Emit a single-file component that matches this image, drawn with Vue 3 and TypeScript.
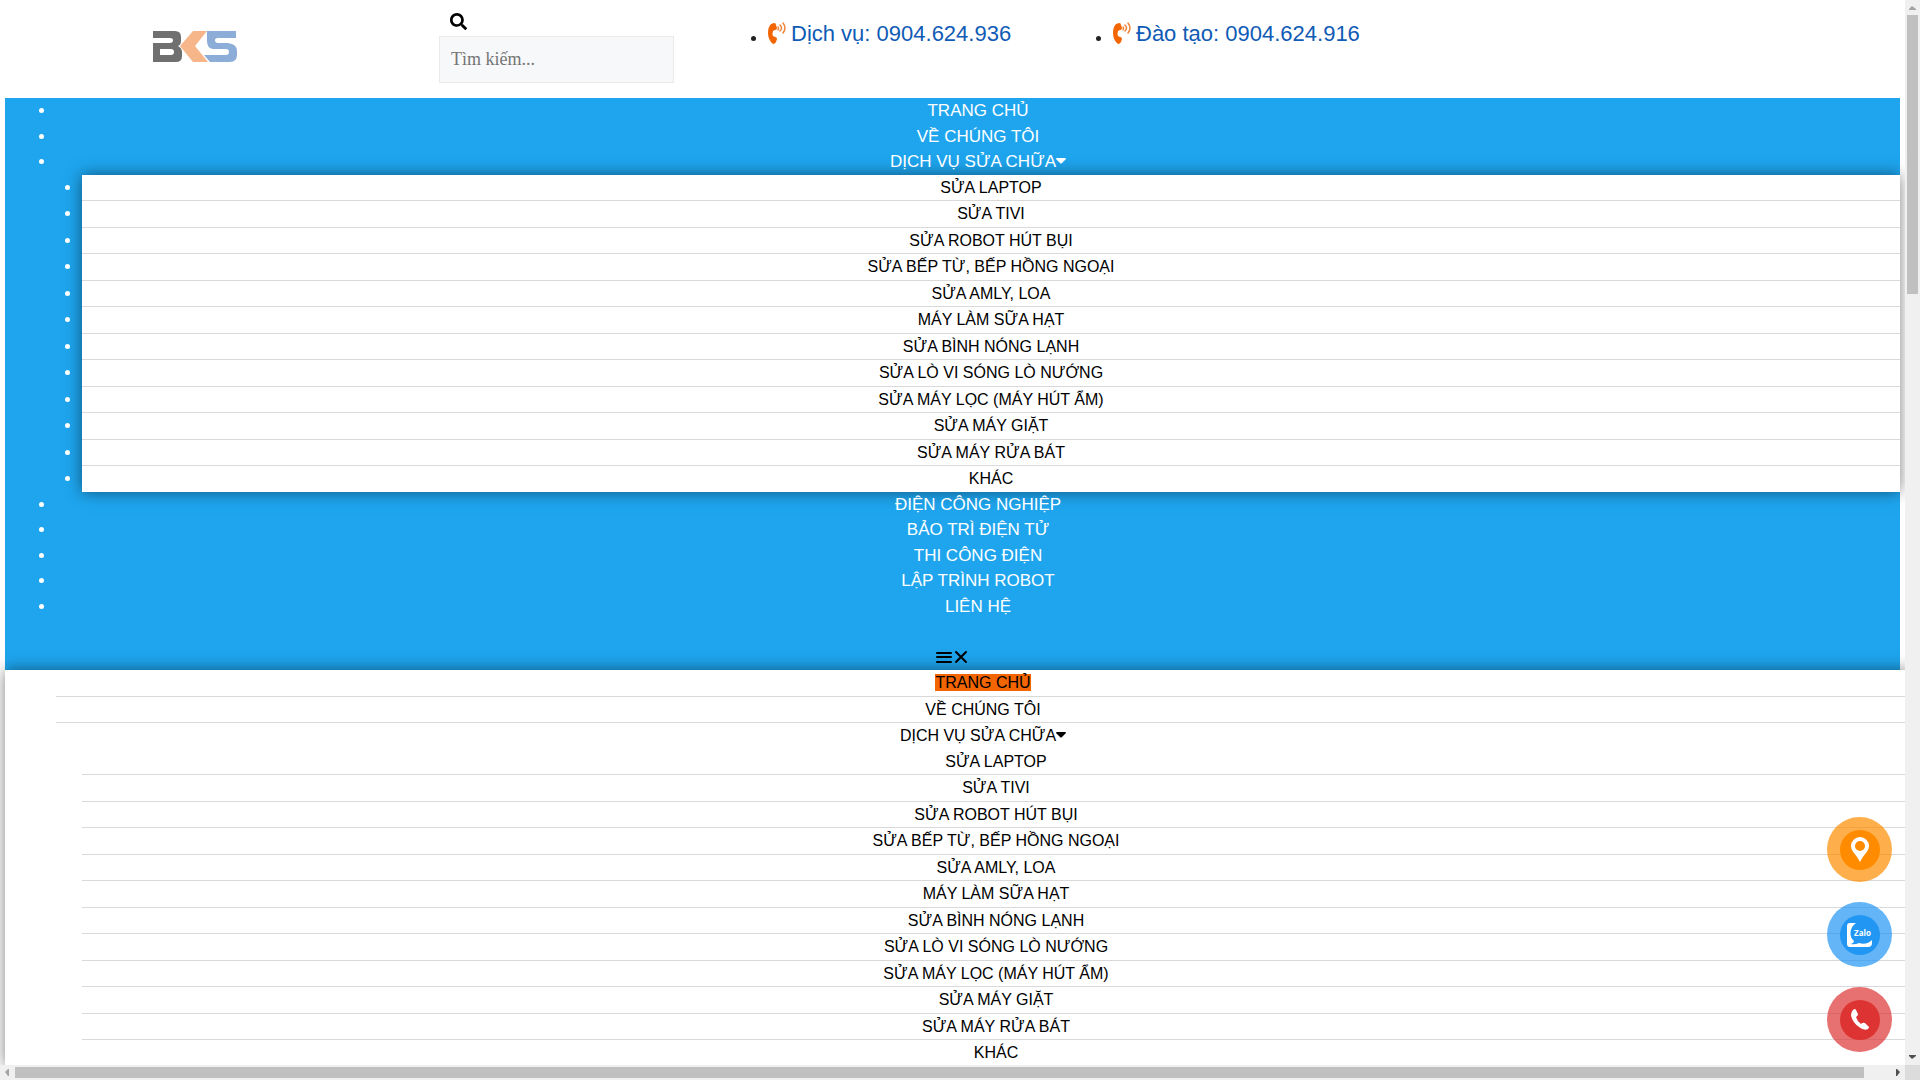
<script setup lang="ts">
import { ref } from 'vue'

interface MenuItem {
  label: string
  children?: string[]
}

const services: string[] = [
  'SỬA LAPTOP',
  'SỬA TIVI',
  'SỬA ROBOT HÚT BỤI',
  'SỬA BẾP TỪ, BẾP HỒNG NGOẠI',
  'SỬA AMLY, LOA',
  'MÁY LÀM SỮA HẠT',
  'SỬA BÌNH NÓNG LẠNH',
  'SỬA LÒ VI SÓNG LÒ NƯỚNG',
  'SỬA MÁY LỌC (MÁY HÚT ẨM)',
  'SỬA MÁY GIẶT',
  'SỬA MÁY RỬA BÁT',
  'KHÁC',
]

const menu: MenuItem[] = [
  { label: 'TRANG CHỦ' },
  { label: 'VỀ CHÚNG TÔI' },
  { label: 'DỊCH VỤ SỬA CHỮA', children: services },
  { label: 'ĐIỆN CÔNG NGHIỆP' },
  { label: 'BẢO TRÌ ĐIỆN TỬ' },
  { label: 'THI CÔNG ĐIỆN' },
  { label: 'LẬP TRÌNH ROBOT' },
  { label: 'LIÊN HỆ' },
]

const dropdownMenu: MenuItem[] = menu.slice(0, 3)
const phones: string[] = ['Dịch vụ: 0904.624.936', 'Đào tạo: 0904.624.916']
const query = ref('')
</script>

<template>
  <div class="frame">
    <div class="page">
      <header class="header">
        <a class="logo" href="#" aria-label="BKS">
          <svg width="84" height="31" viewBox="0 0 84 31">
            <path fill="#707070" fill-rule="evenodd" d="M0 0H22Q28 0 28 6V10Q28 14 25 15Q29 17 29 21V25Q29 31 23 31H0V12H17Q20 12 20 9Q20 7 17 7H0ZM7 18V24H18Q21 24 21 21Q21 18 18 18Z" />
            <path fill="#f7b58a" d="M40 0H54L42 15L55 31H40L27 15Z" />
            <path fill="#8badd8" d="M54 0H83V7H65Q62 7 62 9Q62 12 65 12H75Q84 13 84 20V24Q84 31 77 31H57L51 24H73Q76 24 76 21Q76 18 73 18H60Q54 17 54 10Z" />
          </svg>
        </a>
        <form class="search" role="search" @submit.prevent>
          <label for="search-box" aria-label="Tìm kiếm">
            <svg width="17" height="17" viewBox="0 0 512 512">
              <path d="M505 443L405 343c-4-4-10-7-17-7H372c28-35 44-80 44-128C416 93 323 0 208 0S0 93 0 208s93 208 208 208c48 0 93-16 128-44v16c0 7 3 13 7 17l100 100c9 9 25 9 34 0l28-28c9-9 9-25 0-34zM208 336c-71 0-128-57-128-128 0-71 57-128 128-128 71 0 128 57 128 128 0 71-57 128-128 128z" />
            </svg>
          </label>
          <input id="search-box" v-model="query" type="search" placeholder="Tìm kiếm..." />
        </form>
        <ul v-for="phone in phones" :key="phone" class="phone">
          <li>
            <a href="#">
              <svg width="18" height="22" viewBox="0 0 18 22" fill="none">
                <path fill="#f26500" d="M3 2L6 1Q8 1 8 3L9 6Q9 8 7 8L5 9Q4 12 5 14L7 15Q9 15 9 17L8 20Q7 22 5 22Q0 18 0 11Q0 5 3 2Z" />
                <path stroke="#f28438" stroke-width="1.5" stroke-linecap="round" d="M10 5Q11 6 10 8M12 3Q15 6 12 9M15 1Q19 6 15 11" />
              </svg>
              <span>{{ phone }}</span>
            </a>
          </li>
        </ul>
      </header>

      <div class="nav-block">
        <nav class="main-nav">
          <ul>
            <li v-for="item in menu" :key="item.label">
              <a href="#">{{ item.label }}<svg v-if="item.children" class="caret" width="10" height="6" viewBox="0 0 10 6"><path d="M1 0H9Q10 0 10 1L6 5Q5 6 4 5L0 1Q0 0 1 0Z" /></svg></a>
              <ul v-if="item.children" class="sub boxed">
                <li v-for="child in item.children" :key="child"><a href="#">{{ child }}</a></li>
              </ul>
            </li>
          </ul>
        </nav>
        <button class="toggle" type="button" aria-label="Menu">
          <svg width="17" height="17" viewBox="0 0 17 17" stroke="#000" stroke-width="2" stroke-linecap="round"><path d="M1 4H15M1 8H15M1 13H15" /></svg>
          <svg width="17" height="17" viewBox="0 0 17 17" stroke="#000" stroke-width="2" stroke-linecap="round"><path d="M3 3L13 13M13 3L3 13" /></svg>
        </button>
        <nav class="dropdown">
          <ul>
            <li v-for="(item, i) in dropdownMenu" :key="item.label">
              <a href="#" :class="{ active: i === 0 }">{{ item.label }}<svg v-if="item.children" class="caret" width="10" height="6" viewBox="0 0 10 6"><path d="M1 0H9Q10 0 10 1L6 5Q5 6 4 5L0 1Q0 0 1 0Z" /></svg></a>
              <ul v-if="item.children" class="sub">
                <li v-for="child in item.children" :key="child"><a href="#">{{ child }}</a></li>
              </ul>
            </li>
          </ul>
        </nav>
      </div>
    </div>

    <div class="contacts">
      <a class="contact map" href="#" aria-label="Bản đồ">
        <span>
          <svg width="18" height="26" viewBox="0 0 18 26"><path fill="#fff" fill-rule="evenodd" d="M9 0A9 9 0 0 1 18 9C18 14 13 17 9 25C5 17 0 14 0 9A9 9 0 0 1 9 0ZM9 4A5 5 0 1 0 9 14A5 5 0 1 0 9 4Z" /></svg>
        </span>
      </a>
      <a class="contact zalo" href="#" aria-label="Zalo">
        <span>
          <svg width="26" height="24" viewBox="0 0 26 24">
            <path fill="#fff" d="M3 0H9C2 5 2 14 7 18Q7 20 4 21C9 22 11 20 12 20C17 22 22 20 25 17V20Q25 24 21 24H3Q0 24 0 21V3Q0 0 3 0Z" />
            <text x="7" y="13" font-family="Open Sans, sans-serif" font-weight="700" font-size="8" fill="#fff">Zalo</text>
          </svg>
        </span>
      </a>
      <a class="contact call" href="#" aria-label="Gọi điện">
        <span>
          <svg width="18" height="21" viewBox="0 0 18 21"><path fill="#fff" d="M2 1Q4 -1 5 1L7 5Q7 7 5 8Q6 12 10 15Q12 13 14 14L17 17Q19 18 17 20Q13 22 8 18Q1 13 0 6Q0 3 2 1Z" /></svg>
        </span>
      </a>
    </div>

    <div class="bar vertical" aria-hidden="true">
      <svg width="15" height="15"><path fill="#a3a3a3" d="M4 10H11V9L7 6L4 9Z" /></svg>
      <div class="track"><div class="thumb"></div></div>
      <svg width="15" height="15"><path fill="#505050" d="M4 5H11V6L7 9L4 6Z" /></svg>
    </div>
    <div class="bar horizontal" aria-hidden="true">
      <svg width="15" height="15"><path fill="#a3a3a3" d="M9 4V11H8L5 7L8 4Z" /></svg>
      <div class="track"><div class="thumb"></div></div>
      <svg width="15" height="15"><path fill="#505050" d="M6 4V11H7L10 7L7 4Z" /></svg>
    </div>
    <div class="corner"></div>
  </div>
</template>

<style>
body {
  margin: 0;
  background: #fff;
}
</style>

<style scoped>
* {
  box-sizing: border-box;
}
.frame {
  position: relative;
  display: grid;
  grid-template-columns: minmax(0, 1fr) 15px;
  grid-template-rows: minmax(0, 1fr) 15px;
  height: 100vh;
  font-family: "Liberation Sans", Arial, sans-serif;
  font-size: 17px;
  line-height: 1.5;
  color: #222;
}
.page {
  overflow: hidden;
  padding: 5px 5px 0;
}
ul {
  list-style: disc;
  margin: 0;
  padding: 0;
}
a {
  color: inherit;
  text-decoration: none;
}
.header {
  display: flex;
  align-items: flex-start;
  height: 93px;
}
.logo {
  flex: none;
  width: 434px;
  padding: 26px 0 0 148px;
}
.logo svg {
  display: block;
}
.search {
  width: 235px;
  margin-right: 94px;
}
.search label {
  display: block;
  padding: 8px 0 6px 11px;
}
.search label svg {
  display: block;
}
.search input {
  display: block;
  width: 100%;
  height: 47px;
  padding: 0 11px;
  border: 1px solid #eaeaea;
  border-radius: 0;
  background: #f7f8fa;
  font-family: "Liberation Serif", "Times New Roman", serif;
  font-size: 18px;
  color: #222;
  outline: none;
  appearance: none;
}
.search input::placeholder {
  color: #757575;
  opacity: 1;
}
.phone {
  width: 345px;
  padding-top: 12px;
}
.phone a {
  display: flex;
  align-items: center;
  gap: 5px;
  font-size: 22px;
  color: #0f5bb5;
}
.phone svg {
  margin-bottom: 2px;
}
.nav-block {
  background: #1ea5ee;
  text-align: center;
}
.main-nav > ul {
  padding-left: 51px;
  margin-bottom: 1.5em;
  color: #fff;
}
.caret {
  vertical-align: 3px;
  fill: currentColor;
}
.sub {
  margin-left: 26px;
}
.boxed {
  background: #fff;
  box-shadow: 0 0 15px rgba(0, 0, 0, 0.5);
}
.sub a,
.dropdown a {
  font-size: 16px;
  color: #000;
}
.sub li,
.dropdown > ul > li {
  border-bottom: 1px solid #d9d9d9;
}
.sub li:last-child,
.dropdown > ul > li:last-child {
  border-bottom: 0;
}
.toggle {
  display: flex;
  justify-content: center;
  align-items: center;
  width: 100%;
  height: 1.5em;
  padding: 0;
  border: 0;
  background: none;
  font-size: 17px;
}
.dropdown {
  margin-right: -10px;
  padding-left: 51px;
  background: #fff;
  box-shadow: 0 0 15px rgba(0, 0, 0, 0.5);
}
.dropdown ul {
  list-style: none;
}
.dropdown .active {
  background: #f26500;
}
.contacts {
  position: absolute;
  right: 28px;
  bottom: 28px;
  display: grid;
  gap: 20px;
}
.contact {
  display: grid;
  place-items: center;
  width: 65px;
  height: 65px;
  border-radius: 50%;
}
.contact span {
  display: grid;
  place-items: center;
  width: 40px;
  height: 40px;
  border-radius: 50%;
}
.map {
  background: rgba(255, 140, 0, 0.7);
}
.map span {
  background: #ff8c00;
}
.zalo {
  background: rgba(33, 150, 243, 0.7);
}
.zalo span {
  background: #2196f3;
}
.call {
  background: rgba(221, 51, 51, 0.7);
}
.call span {
  background: #dd3333;
}
.bar {
  display: flex;
  background: #f0f0f0;
}
.bar svg {
  flex: none;
}
.vertical {
  flex-direction: column;
}
.track {
  flex: 1;
  min-height: 0;
}
.thumb {
  background: #c0c0c0;
}
.vertical .thumb {
  width: 11px;
  height: 27%;
  margin: 0 2px;
}
.horizontal .thumb {
  width: 98.6%;
  height: 11px;
  margin: 2px 0;
}
.corner {
  background: #dcdcdc;
}
</style>
